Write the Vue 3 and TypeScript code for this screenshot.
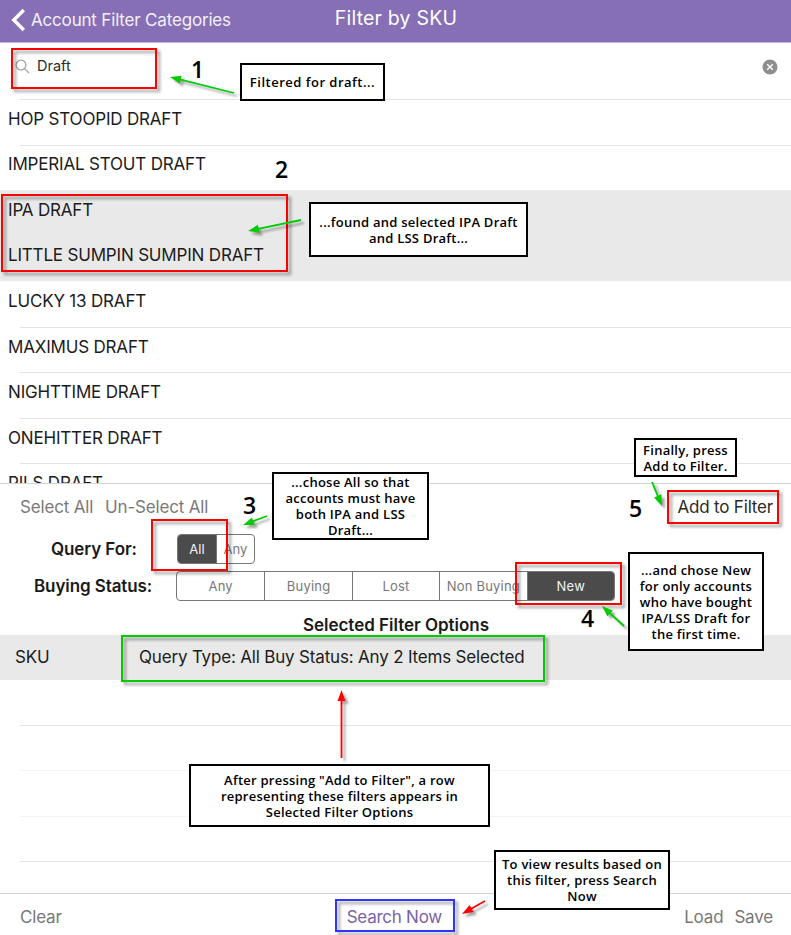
<script setup lang="ts">
import { ref } from 'vue'

interface Sku { name: string; selected?: boolean }
interface Callout { id: string; lines: string[] }
interface Arrow { x1: number; y1: number; x2: number; y2: number; color: string }

const query = ref('Draft')

const skus: Sku[] = [
  { name: 'HOP STOOPID DRAFT' },
  { name: 'IMPERIAL STOUT DRAFT' },
  { name: 'IPA DRAFT', selected: true },
  { name: 'LITTLE SUMPIN SUMPIN DRAFT', selected: true },
  { name: 'LUCKY 13 DRAFT' },
  { name: 'MAXIMUS DRAFT' },
  { name: 'NIGHTTIME DRAFT' },
  { name: 'ONEHITTER DRAFT' },
  { name: 'PILS DRAFT' },
]

const queryTypes = ['All', 'Any']
const buyingStatuses = ['Any', 'Buying', 'Lost', 'Non Buying', 'New']
const queryType = ref('All')
const buyingStatus = ref('New')

const highlights = ['search', 'skus', 'all', 'new', 'add', 'result', 'run']

const callouts: Callout[] = [
  { id: 'filtered', lines: ['Filtered for draft...'] },
  { id: 'found', lines: ['...found and selected IPA Draft', 'and LSS Draft...'] },
  { id: 'chose-all', lines: ['...chose All so that', 'accounts must have', 'both IPA and LSS', 'Draft...'] },
  { id: 'finally', lines: ['Finally, press', 'Add to Filter.'] },
  { id: 'chose-new', lines: ['...and chose New', 'for only accounts', 'who have bought', 'IPA/LSS Draft for', 'the first time.'] },
  { id: 'after', lines: ['After pressing "Add to Filter", a row', 'representing these filters appears in', 'Selected Filter Options'] },
  { id: 'view', lines: ['To view results based on', 'this filter, press Search', 'Now'] },
]

const green = '#00cc00'
const red = '#ff0000'
const arrows: Arrow[] = [
  { x1: 234, y1: 93, x2: 170, y2: 77, color: green },
  { x1: 301, y1: 220, x2: 248, y2: 231, color: green },
  { x1: 267, y1: 516, x2: 243, y2: 525, color: green },
  { x1: 652, y1: 482, x2: 662, y2: 506, color: green },
  { x1: 624, y1: 626, x2: 602, y2: 606, color: green },
  { x1: 341.5, y1: 758, x2: 341.5, y2: 690, color: red },
  { x1: 485, y1: 901, x2: 462, y2: 914, color: red },
]

function shaft(a: Arrow) {
  const len = Math.hypot(a.x2 - a.x1, a.y2 - a.y1)
  const k = (len - 8) / len
  return { x: a.x1 + (a.x2 - a.x1) * k, y: a.y1 + (a.y2 - a.y1) * k }
}

function headTransform(a: Arrow) {
  const deg = (Math.atan2(a.y2 - a.y1, a.x2 - a.x1) * 180) / Math.PI
  return `translate(${a.x2} ${a.y2}) rotate(${deg})`
}
</script>

<template>
  <div class="screen">
    <header class="navbar">
      <button class="back">
        <svg width="16" height="24" viewBox="0 0 16 24" fill="none">
          <path d="M13.8 2 L3.8 12 L13.8 22" stroke="#fff" stroke-width="3.4" />
        </svg>
        <span>Account Filter Categories</span>
      </button>
      <h1>Filter by SKU</h1>
    </header>

    <div class="search">
      <svg class="lens" width="15" height="15" viewBox="0 0 15 15" fill="none" stroke="#a2a4a6" stroke-width="1.3">
        <circle cx="6" cy="6" r="4.9" />
        <path d="M9.6 9.6 L14 14" />
      </svg>
      <span class="query">{{ query }}</span>
      <svg class="clear" width="16" height="16" viewBox="0 0 16 16">
        <circle cx="8" cy="8" r="7.5" fill="#8e8e8e" />
        <path d="M5.2 5.2 L10.8 10.8 M10.8 5.2 L5.2 10.8" stroke="#fff" stroke-width="1.4" />
      </svg>
    </div>

    <ul class="skus">
      <li v-for="s in skus" :key="s.name" :class="['sku', { selected: s.selected }]">
        <span>{{ s.name }}</span>
      </li>
    </ul>

    <section class="options">
      <div class="toolbar">
        <span class="select-all">Select All</span>
        <span class="unselect">Un-Select All</span>
        <span class="add">Add to Filter</span>
      </div>
      <div class="field">
        <label class="for">Query For:</label>
        <div class="segments small">
          <span v-for="t in queryTypes" :key="t" :class="{ on: t === queryType }">{{ t }}</span>
        </div>
      </div>
      <div class="field status">
        <label>Buying Status:</label>
        <div class="segments wide">
          <span v-for="t in buyingStatuses" :key="t" :class="{ on: t === buyingStatus }">{{ t }}</span>
        </div>
      </div>
      <h2>Selected Filter Options</h2>
    </section>

    <section class="chosen">
      <div class="filter-row">
        <span class="kind">SKU</span>
        <span class="detail">Query Type: All Buy Status: Any 2 Items Selected</span>
      </div>
      <div v-for="n in 4" :key="n" :class="['blank', 'blank-' + n]"></div>
    </section>

    <footer class="bottom">
      <span class="clear-all">Clear</span>
      <span class="run">Search Now</span>
      <span class="load">Load</span>
      <span class="save">Save</span>
    </footer>

    <div v-for="h in highlights" :key="h" :class="['mark', 'mark-' + h]"></div>
    <svg class="arrows" width="791" height="935" viewBox="0 0 791 935">
      <g v-for="(a, i) in arrows" :key="i">
        <line :x1="a.x1" :y1="a.y1" :x2="shaft(a).x" :y2="shaft(a).y" :stroke="a.color" stroke-width="1.8" />
        <path d="M0 0 L-11 -4 L-11 4 Z" :fill="a.color" :transform="headTransform(a)" />
      </g>
    </svg>
    <div v-for="c in callouts" :key="c.id" :class="['callout', c.id]">
      <span v-for="l in c.lines" :key="l">{{ l }}</span>
    </div>
    <b v-for="n in 5" :key="n" :class="['step', 'step-' + n]">{{ n }}</b>
  </div>
</template>

<style>
body { margin: 0; background: #fff; }
</style>

<style scoped>
.screen {
  position: relative;
  width: 791px;
  height: 935px;
  overflow: hidden;
  display: flex;
  flex-direction: column;
  background: #fff;
  font-family: Inter, "Liberation Sans", sans-serif;
  font-size: 17px;
  letter-spacing: -.18px;
  color: #1c1c1c;
  white-space: nowrap;
}
.navbar {
  height: 43px;
  box-sizing: border-box;
  border-bottom: 1px solid #c3b6de;
  background: #866fb5;
  color: #fff;
  display: grid;
  grid-template-columns: 1fr auto 1fr;
  align-items: center;
}
.back {
  display: flex;
  align-items: center;
  gap: 5px;
  border: 0;
  padding: 0 0 3px 10px;
  background: none;
  color: #f3effa;
  font: inherit;
  letter-spacing: inherit;
}
h1 { margin: 0; padding: 0 0 6px 1px; font-size: 19.5px; font-weight: 400; letter-spacing: .2px; }
.search {
  height: 56px;
  box-sizing: border-box;
  display: flex;
  align-items: center;
  padding: 0 13px 9px 15px;
}
.query { margin-left: 7px; padding-bottom: 2px; font-size: 14.5px; letter-spacing: 0; color: #2c2c2c; }
.clear { margin-left: auto; }
.skus {
  list-style: none;
  margin: 0;
  padding: 0;
  height: 384px;
  overflow: hidden;
}
.sku {
  height: 45.55px;
  box-sizing: border-box;
  padding: 0 0 6px 8px;
  display: flex;
  align-items: center;
  background: linear-gradient(#e4e4e4, #e4e4e4) 20px 0 / 100% 1px no-repeat;
}
.sku.selected { background: #e9e9e9; }
.sku.selected + .sku:not(.selected) { background: none; }
.options { height: 152px; box-sizing: border-box; border-top: 1px solid #d4d4d4; }
.toolbar { height: 46px; display: flex; align-items: center; padding: 0 18px 0 20px; color: #7a7a7a; }
.unselect { margin-left: 12px; }
.add { margin-left: auto; color: #2a2a2a; }
.field { display: flex; align-items: center; height: 38px; font-weight: 600; }
.status { height: 36px; }
.field label { width: 117px; padding-left: 34px; color: #1a1a1a; margin-right: 25px; letter-spacing: -.1px; }
.field label.for { padding-left: 51px; width: 100px; margin-right: 26px; }
.segments {
  display: grid;
  height: 30px;
  box-sizing: border-box;
  border: 1px solid #777;
  border-radius: 4px;
  overflow: hidden;
  font-size: 13px;
  font-weight: 400;
  letter-spacing: 0;
  color: #777;
}
.small { width: 78px; grid-template-columns: 1fr 1fr; }
.wide { width: 439px; grid-template-columns: repeat(5, minmax(0, 1fr)); letter-spacing: .2px; }
.segments span { display: flex; align-items: center; justify-content: center; }
.segments span + span { border-left: 1px solid #777; }
.segments .on { background: #4b4b4b; color: #f2f2f2; }
h2 { margin: 0; padding: 11px 0 0 1px; text-align: center; font-size: 17px; line-height: 20px; font-weight: 600; letter-spacing: -.02px; color: #1a1a1a; }
.chosen { height: 258px; }
.filter-row { height: 45px; padding-bottom: 1px; box-sizing: border-box; display: flex; align-items: center; background: #e9e9e9; }
.kind { width: 124px; padding-left: 15px; }
.blank { height: 45.55px; box-sizing: border-box; margin-left: 20px; border-bottom: 1px solid #e4e4e4; }
.blank-2, .blank-3 { border-color: #f3f3f3; }
.bottom {
  height: 42px;
  box-sizing: border-box;
  border-top: 1px solid #d0d0d0;
  display: flex;
  align-items: center;
  padding: 4px 18px 0 20px;
  color: #777;
}
.run { margin-left: 285px; color: #7a63a8; letter-spacing: -.25px; }
.load { margin-left: auto; margin-right: 11px; }

.mark {
  position: absolute;
  box-sizing: border-box;
  border: 2px solid #ff0000;
  filter: drop-shadow(3px 3px 1.5px rgba(0, 0, 0, .4));
}
.mark-search { left: 11px; top: 48px; width: 146px; height: 41px; }
.mark-skus { left: 1px; top: 194px; width: 287px; height: 78px; }
.mark-all { left: 151px; top: 519px; width: 77px; height: 52px; }
.mark-new { left: 515px; top: 562px; width: 107px; height: 43px; }
.mark-add { left: 667px; top: 490px; width: 112px; height: 34px; }
.mark-result { left: 121px; top: 635px; width: 424px; height: 47px; border-color: #00cc00; }
.mark-run { left: 335px; top: 899px; width: 120px; height: 33px; border-color: #3333ff; }

.arrows { position: absolute; left: 0; top: 0; filter: drop-shadow(3px 3px 1px rgba(0, 0, 0, .35)); }

.callout {
  position: absolute;
  box-sizing: border-box;
  border: 2px solid #000;
  background: #fff;
  color: #000;
  display: flex;
  flex-direction: column;
  align-items: center;
  justify-content: center;
  font: 600 13px/16px "Open Sans", sans-serif;
  letter-spacing: .25px;
}
.filtered { left: 240px; top: 63px; width: 145px; height: 38px; letter-spacing: .5px; }
.found { left: 309px; top: 202px; width: 219px; height: 55px; }
.chose-all { left: 272px; top: 472px; width: 157px; height: 68px; }
.finally { left: 634px; top: 438px; width: 103px; height: 39px; }
.chose-new { left: 628px; top: 552px; width: 136px; height: 99px; }
.after { left: 189px; top: 764px; width: 301px; height: 63px; }
.view { left: 494px; top: 850px; width: 176px; height: 60px; }

.step { position: absolute; font: 600 23px/22px "Open Sans", sans-serif; letter-spacing: 0; color: #000; }
.step-1 { left: 191px; top: 58px; }
.step-2 { left: 275px; top: 158px; }
.step-3 { left: 243px; top: 494px; }
.step-4 { left: 581px; top: 607px; }
.step-5 { left: 629px; top: 497px; }
</style>
